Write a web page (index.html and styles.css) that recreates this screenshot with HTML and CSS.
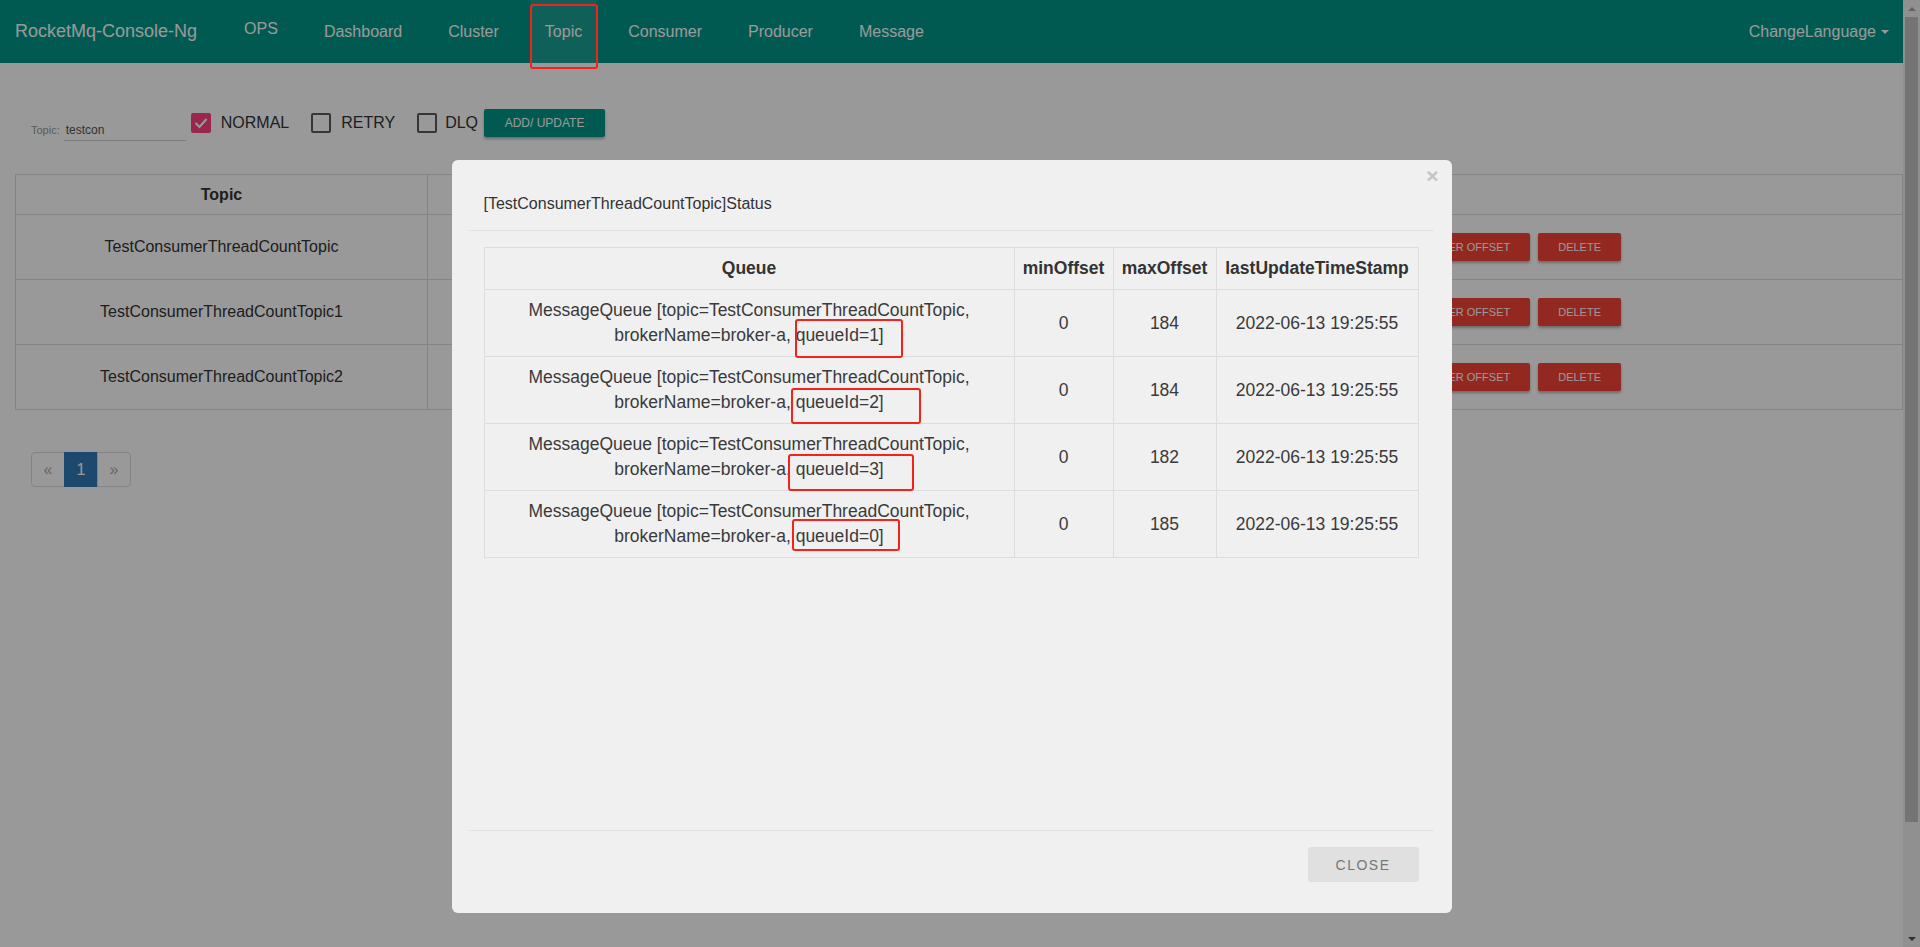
FILE: index.html
```html
<!DOCTYPE html>
<html lang="en">
<head>
<meta charset="utf-8">
<title>RocketMq-Console-Ng</title>
<link rel="stylesheet" href="styles.css">
</head>
<body>
<div class="page">
  <nav class="navbar">
    <div class="brand">RocketMq-Console-Ng</div>
    <ul class="nav">
      <li class="nav-ops">OPS</li>
      <li>Dashboard</li>
      <li>Cluster</li>
      <li class="active">Topic</li>
      <li>Consumer</li>
      <li>Producer</li>
      <li>Message</li>
    </ul>
    <div class="lang">ChangeLanguage<span class="caret"></span></div>
  </nav>

  <div class="content">
    <div class="filter">
      <div class="field">
        <span class="field-label">Topic:</span>
        <span class="field-input">testcon</span>
      </div>
      <span class="cb checked"><svg viewBox="0 0 20 20" width="20" height="20"><polyline points="4.5,10 8.5,14 15.5,6" fill="none" stroke="#fff" stroke-width="2"/></svg></span>
      <span class="cb-label">NORMAL</span>
      <span class="cb"></span>
      <span class="cb-label">RETRY</span>
      <span class="cb"></span>
      <span class="cb-label dlq">DLQ</span>
      <button class="btn-add">ADD/ UPDATE</button>
    </div>

    <table class="topic-table">
      <thead>
        <tr><th class="col-topic">Topic</th><th>Operation</th></tr>
      </thead>
      <tbody>
        <tr>
          <td>TestConsumerThreadCountTopic</td>
          <td><div class="ops"><span class="btn-red">RESET CONSUMER OFFSET</span><span class="btn-red del">DELETE</span></div></td>
        </tr>
        <tr>
          <td>TestConsumerThreadCountTopic1</td>
          <td><div class="ops"><span class="btn-red">RESET CONSUMER OFFSET</span><span class="btn-red del">DELETE</span></div></td>
        </tr>
        <tr>
          <td>TestConsumerThreadCountTopic2</td>
          <td><div class="ops"><span class="btn-red">RESET CONSUMER OFFSET</span><span class="btn-red del">DELETE</span></div></td>
        </tr>
      </tbody>
    </table>

    <ul class="pagination">
      <li class="disabled">&laquo;</li>
      <li class="current">1</li>
      <li class="disabled">&raquo;</li>
    </ul>
  </div>
</div>

<div class="scrollbar">
  <div class="sb-btn"><span class="sb-up"></span></div>
  <div class="sb-thumb"></div>
  <div class="sb-fill"></div>
  <div class="sb-btn"><span class="sb-down"></span></div>
</div>

<div class="backdrop"></div>

<div class="modal-layer">
  <div class="modal">
    <span class="close">&times;</span>
    <div class="modal-header">[TestConsumerThreadCountTopic]Status</div>
    <div class="modal-body">
      <table class="status-table">
        <colgroup>
          <col class="c-queue"><col class="c-min"><col class="c-max"><col class="c-time">
        </colgroup>
        <thead>
          <tr><th>Queue</th><th>minOffset</th><th>maxOffset</th><th>lastUpdateTimeStamp</th></tr>
        </thead>
        <tbody>
          <tr>
            <td>MessageQueue [topic=TestConsumerThreadCountTopic, brokerName=broker-a, <span class="hl hl1">queueId=1]</span></td>
            <td>0</td><td>184</td><td>2022-06-13 19:25:55</td>
          </tr>
          <tr>
            <td>MessageQueue [topic=TestConsumerThreadCountTopic, brokerName=broker-a, <span class="hl hl2">queueId=2]</span></td>
            <td>0</td><td>184</td><td>2022-06-13 19:25:55</td>
          </tr>
          <tr>
            <td>MessageQueue [topic=TestConsumerThreadCountTopic, brokerName=broker-a, <span class="hl hl3">queueId=3]</span></td>
            <td>0</td><td>182</td><td>2022-06-13 19:25:55</td>
          </tr>
          <tr>
            <td>MessageQueue [topic=TestConsumerThreadCountTopic, brokerName=broker-a, <span class="hl hl4">queueId=0]</span></td>
            <td>0</td><td>185</td><td>2022-06-13 19:25:55</td>
          </tr>
        </tbody>
      </table>
    </div>
    <div class="modal-footer">
      <button class="btn-close">CLOSE</button>
    </div>
  </div>
</div>
</body>
</html>
```

FILE: styles.css
```css
* { box-sizing: border-box; }

html, body {
  margin: 0;
  height: 100%;
  overflow: hidden;
}

body {
  display: flex;
  font-family: "Liberation Sans", Arial, sans-serif;
  font-size: 16px;
  color: #333;
  background: #fff;
}

.page {
  flex: 1;
  min-width: 0;
  background: #fff;
}

/* ---------- navbar ---------- */
.navbar {
  display: flex;
  align-items: stretch;
  height: 63px;
  background: #009688;
  color: #fff;
}

.brand {
  display: flex;
  align-items: center;
  padding: 0 33px 0 15px;
  font-size: 18px;
}

.nav {
  display: flex;
  list-style: none;
  margin: 0;
  padding: 0;
}

.nav li {
  position: relative;
  display: flex;
  align-items: center;
  padding: 0 14px;
  margin-right: 18px;
  font-size: 16px;
}

.nav li.nav-ops {
  padding-bottom: 5px;
}

.nav li.active {
  background: rgba(255, 255, 255, 0.1);
}

.nav li.active::after {
  content: "";
  position: absolute;
  left: -1px;
  right: -2px;
  top: 4px;
  bottom: -6px;
  border: 2px solid #f5221b;
  border-radius: 3px;
  z-index: 30;
}

.lang {
  margin-left: auto;
  display: flex;
  align-items: center;
  padding-right: 14px;
  font-size: 16px;
}

.caret {
  display: inline-block;
  margin-left: 5px;
  border-left: 4px solid transparent;
  border-right: 4px solid transparent;
  border-top: 4px solid #fff;
}

/* ---------- content ---------- */
.content {
  padding-left: 15px;
}

.filter {
  display: flex;
  align-items: center;
  height: 30px;
  margin-top: 45px;
  padding-left: 16px;
}

.field {
  display: flex;
  align-items: baseline;
  align-self: flex-end;
  margin-bottom: -3px;
}

.field-label {
  font-size: 11px;
  color: #999;
}

.field-input {
  display: block;
  width: 122px;
  height: 21px;
  margin-left: 4px;
  padding-left: 2px;
  line-height: 20px;
  font-size: 12px;
  color: #555;
  border-bottom: 1px solid #ccc;
}

.cb {
  display: inline-flex;
  width: 20px;
  height: 20px;
  margin-left: 22px;
  border: 2px solid #5a5a5a;
  border-radius: 2px;
}

.field + .cb {
  margin-left: 5px;
}

.cb.checked {
  border: none;
  background: #ff4081;
}

.cb-label {
  margin-left: 10px;
  font-size: 16px;
  color: #333;
}

.cb-label.dlq {
  margin-left: 8px;
}

.btn-add {
  margin-left: 6px;
  width: 121px;
  height: 28px;
  border: none;
  border-radius: 2px;
  background: #009688;
  color: #fff;
  font-family: "Liberation Sans", Arial, sans-serif;
  font-size: 12px;
  box-shadow: 0 2px 3px rgba(0, 0, 0, 0.3);
  padding: 0;
}

.topic-table {
  width: 100%;
  margin-top: 36px;
  border-collapse: collapse;
  border: 1px solid #ddd;
}

.topic-table th {
  padding: 8px;
  line-height: 23px;
  font-weight: bold;
  text-align: center;
  border: 1px solid #ddd;
}

.topic-table th.col-topic {
  width: 412px;
}

.topic-table td {
  padding: 18px 8px;
  line-height: 28px;
  text-align: center;
  border: 1px solid #ddd;
}

.ops {
  display: flex;
  justify-content: flex-end;
  gap: 8px;
  padding-right: 273px;
}

.btn-red {
  display: inline-flex;
  align-items: center;
  height: 28px;
  padding: 0 20px;
  background: #f44336;
  color: #fff;
  font-size: 11px;
  border-radius: 2px;
  box-shadow: 0 2px 3px rgba(0, 0, 0, 0.3);
}

.pagination {
  display: flex;
  list-style: none;
  margin: 42px 0 0 16px;
  padding: 0;
}

.pagination li {
  width: 34px;
  height: 35px;
  line-height: 33px;
  text-align: center;
  border: 1px solid #ddd;
  margin-left: -1px;
  font-size: 16px;
  color: #aaa;
  background: #fff;
}

.pagination li:first-child {
  margin-left: 0;
  border-radius: 4px 0 0 4px;
}

.pagination li:last-child {
  border-radius: 0 4px 4px 0;
}

.pagination li.current {
  background: #337ab7;
  border-color: #337ab7;
  color: #fff;
}

/* ---------- fake scrollbar ---------- */
.scrollbar {
  width: 17px;
  height: 100vh;
  flex: none;
  display: flex;
  flex-direction: column;
  background: #f1f1f1;
}

.sb-btn {
  height: 17px;
  display: flex;
  align-items: center;
  justify-content: center;
}

.sb-up {
  border-left: 4px solid transparent;
  border-right: 4px solid transparent;
  border-bottom: 4px solid #a3a3a3;
}

.sb-down {
  border-left: 4px solid transparent;
  border-right: 4px solid transparent;
  border-top: 4px solid #505050;
}

.sb-thumb {
  height: 805px;
  margin: 0 2px;
  background: #c1c1c1;
}

.sb-fill {
  flex: 1;
}

/* ---------- modal ---------- */
.backdrop {
  position: fixed;
  inset: 0;
  background: rgba(0, 0, 0, 0.4);
  z-index: 10;
}

.modal-layer {
  position: fixed;
  top: 0;
  left: 0;
  right: 17px;
  bottom: 0;
  display: flex;
  justify-content: center;
  padding-top: 160px;
  z-index: 20;
}

.modal {
  position: relative;
  width: 1000px;
  height: 753px;
  display: flex;
  flex-direction: column;
  padding: 0 18px 0 17px;
  background: #f0f0f0;
  border-radius: 6px;
}

.close {
  position: absolute;
  top: 5px;
  right: 13px;
  font-size: 21px;
  line-height: 21px;
  font-weight: bold;
  color: #c4c4c4;
}

.modal-header {
  padding: 32px 15px 15px;
  line-height: 23px;
  font-size: 16px;
  color: #333;
  border-bottom: 1px solid #e3e3e3;
}

.modal-body {
  flex: 1;
  padding: 16px 15px;
}

.status-table {
  width: 100%;
  table-layout: fixed;
  border-collapse: collapse;
  border: 1px solid #ddd;
  font-size: 17.5px;
  line-height: 25px;
}

.c-queue { width: 530px; }
.c-min { width: 99px; }
.c-max { width: 103px; }
.c-time { width: 202px; }

.status-table th {
  padding: 8px 4px;
  font-weight: bold;
  text-align: center;
  color: #333;
  border: 1px solid #ddd;
  white-space: nowrap;
}

.status-table td {
  padding: 8px;
  text-align: center;
  vertical-align: middle;
  color: #3a3a3a;
  border: 1px solid #ddd;
}

.hl {
  position: relative;
}

.hl::after {
  content: "";
  position: absolute;
  border: 2px solid #f5221b;
  border-radius: 3px;
}

.hl1::after { left: -1px; right: -19px; top: -6px; bottom: -13px; }
.hl2::after { left: -5px; right: -37px; top: -4px; bottom: -12px; }
.hl3::after { left: -8px; right: -30px; top: -5px; bottom: -12px; }
.hl4::after { left: -4px; right: -16px; top: -7px; bottom: -5px; }

.modal-footer {
  display: flex;
  justify-content: flex-end;
  padding: 16px 15px 31px;
  border-top: 1px solid #e3e3e3;
}

.btn-close {
  width: 111px;
  height: 35px;
  border: none;
  border-radius: 3px;
  background: #e0e0e0;
  color: #777;
  font-family: "Liberation Sans", Arial, sans-serif;
  font-size: 14px;
  letter-spacing: 1.5px;
  padding: 0;
}
```
